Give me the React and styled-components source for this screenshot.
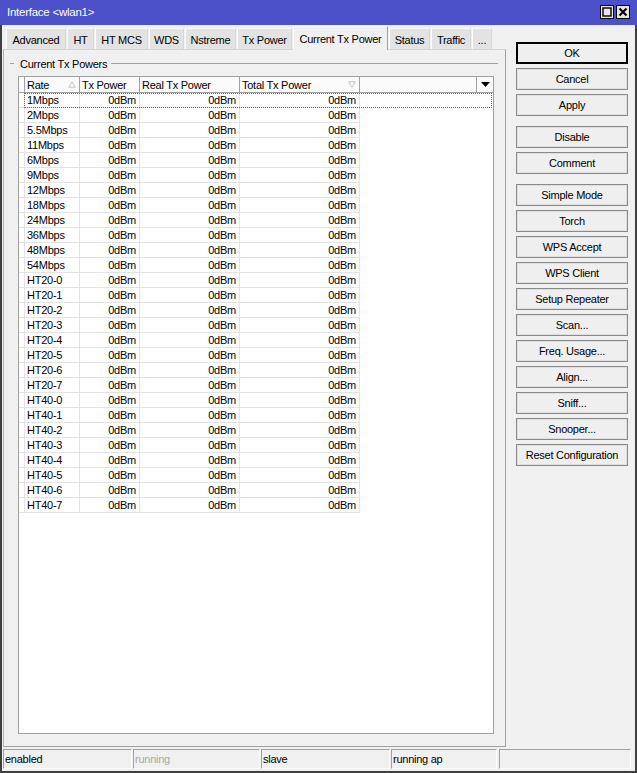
import React from "react";
import styled, { createGlobalStyle } from "styled-components";

const Global = createGlobalStyle`
  html, body { margin: 0; padding: 0; background: #f0f0f0; }
  body { font-family: "Liberation Sans", Arial, sans-serif; }
  * { box-sizing: border-box; }
`;

const FONT = `font-family: "Liberation Sans", Arial, sans-serif; font-size: 11px; letter-spacing: -0.25px;`;

const Window = styled.div`
  width: 637px;
  height: 773px;
  display: flex;
  flex-direction: column;
  background: #f0f0f0;
  border: 2px solid #3f3f3f;
  border-top: none;
  ${FONT}
  color: #000;
`;

const TitleBar = styled.div`
  height: 25px;
  flex: none;
  background: #4c50c9;
  color: #fff;
  display: flex;
  align-items: center;
  margin: 0 -2px;
  padding: 0 7px 1px 7px;
`;

const Title = styled.div`
  flex: 1;
  ${FONT}
  font-size: 11.5px;
`;

const TitleBtns = styled.div`
  display: flex;
  gap: 2px;
`;

const TitleBtn = styled.div`
  width: 14px;
  height: 14px;
  border: 1px solid #000;
  background: #e6e6e6;
  display: flex;
  align-items: center;
  justify-content: center;
`;

const Main = styled.div`
  flex: 1;
  display: flex;
  min-height: 0;
`;

const Left = styled.div`
  width: 503px;
  margin-left: 1px;
  display: flex;
  flex-direction: column;
`;

const TabRow = styled.div`
  height: 24px;
  display: flex;
  align-items: flex-end;
  padding-left: 3px;
  gap: 1px;
  position: relative;
  z-index: 1;
`;

const Tab = styled.div`
  width: ${(p) => `${p.$w}px`};
  flex: none;
  height: ${(p) => (p.$active ? "24px" : "21px")};
  display: flex;
  align-items: center;
  justify-content: center;
  padding-top: ${(p) => (p.$active ? "0" : "1px")};
  background: ${(p) => (p.$active ? "#f0f0f0" : "#e3e3e3")};
  border-left: 1px solid #fcfcfc;
  border-top: 1px solid #fcfcfc;
  border-right: 1px solid ${(p) => (p.$active ? "#a0a0a0" : "#d6d6d6")};
  margin-bottom: ${(p) => (p.$active ? "-1px" : "0")};
  white-space: nowrap;
  overflow: hidden;
`;

const Panel = styled.div`
  flex: 1;
  border: 1px solid #a0a0a0;
  border-top-color: #d4d4d4;
  border-left-color: #b4b4b4;
  display: flex;
  flex-direction: column;
  padding: 6px 11px 12px 5px;
`;

const GroupHead = styled.div`
  height: 15px;
  display: flex;
  align-items: center;
  margin-left: 1px;
  margin-right: -4px;
`;

const GroupLine = styled.div`
  height: 1px;
  background: #a0a0a0;
  flex: ${(p) => (p.$grow ? 1 : "none")};
  width: ${(p) => (p.$grow ? "auto" : "4px")};
`;

const GroupLabel = styled.div`
  padding: 0 4px 0 6px;
  white-space: nowrap;
`;

const Table = styled.div`
  flex: 1;
  margin-top: 5px;
  margin-left: 9px;
  border: 1px solid #a0a0a0;
  background: #fff;
  display: flex;
  flex-direction: column;
`;

const HeaderRow = styled.div`
  display: flex;
  height: 16px;
  border-bottom: 1px solid #a0a0a0;
  background: #fbfbfb;
`;

const HCell = styled.div`
  width: ${(p) => (p.$w ? `${p.$w}px` : "auto")};
  flex: ${(p) => (p.$w ? "none" : 1)};
  border-right: ${(p) => (p.$last ? "none" : "1px solid #a0a0a0")};
  display: flex;
  align-items: center;
  justify-content: ${(p) => (p.$center ? "center" : "space-between")};
  padding: 0 ${(p) => (p.$center ? 0 : 3)}px 0 ${(p) => (p.$center ? 0 : 2)}px;
  white-space: nowrap;
  overflow: hidden;
`;

const Row = styled.div`
  display: flex;
  height: 15px;
  position: relative;
  &::after {
    content: "";
    display: ${(p) => (p.$focused ? "block" : "none")};
    position: absolute;
    left: 5px;
    right: 1px;
    top: 0;
    bottom: 0;
    border: 1px dotted #6a6a6a;
    pointer-events: none;
  }
`;

const Cell = styled.div`
  width: ${(p) => `${p.$w}px`};
  flex: none;
  border-right: 1px solid #e3e3e3;
  border-bottom: 1px solid #e3e3e3;
  display: flex;
  align-items: center;
  justify-content: ${(p) => (p.$right ? "flex-end" : "flex-start")};
  padding: 0 3px 0 2px;
  white-space: nowrap;
  overflow: hidden;
  line-height: 14px;
`;

const Right = styled.div`
  width: 112px;
  margin-left: 10px;
  padding-top: 17px;
  display: flex;
  flex-direction: column;
`;

const BtnGroup = styled.div`
  display: flex;
  flex-direction: column;
  gap: 4px;
  margin-bottom: 10px;
`;

const Button = styled.div`
  height: 22px;
  display: flex;
  align-items: center;
  justify-content: center;
  background: #efefef;
  border: ${(p) => (p.$default ? "2px solid #000" : "1px solid #8a8a8a")};
  box-shadow: ${(p) => (p.$default ? "none" : "inset 0 0 0 1px #dedede")};
  padding-bottom: 1px;
  white-space: nowrap;
`;

const StatusBar = styled.div`
  height: 24px;
  flex: none;
  display: flex;
  gap: 1px;
  padding: 2px 0 2px 1px;
`;

const StatusCell = styled.div`
  width: ${(p) => `${p.$w}px`};
  margin-left: ${(p) => `${p.$ml || 0}px`};
  border-top: 1px solid #a0a0a0;
  border-left: 1px solid #a0a0a0;
  border-right: 1px solid #fdfdfd;
  border-bottom: 1px solid #fdfdfd;
  display: flex;
  align-items: center;
  padding-left: 1px;
  padding-bottom: 1px;
  color: ${(p) => (p.$dim ? "#a8a8a8" : "#000")};
`;

const SortUp = () => (
  <svg width="8" height="7" viewBox="0 0 8 7">
    <path d="M4 0.8 L7.3 6.2 L0.7 6.2 Z" fill="none" stroke="#c4c4c4" strokeWidth="1" />
  </svg>
);

const SortDown = () => (
  <svg width="8" height="7" viewBox="0 0 8 7">
    <path d="M0.7 0.8 L7.3 0.8 L4 6.2 Z" fill="none" stroke="#c4c4c4" strokeWidth="1" />
  </svg>
);

const DropArrow = () => (
  <svg width="9" height="5" viewBox="0 0 9 5">
    <path d="M0 0 L9 0 L4.5 5 Z" fill="#000" />
  </svg>
);

const tabs = [
  { t: "Advanced", w: 60 },
  { t: "HT", w: 27 },
  { t: "HT MCS", w: 53 },
  { t: "WDS", w: 35 },
  { t: "Nstreme", w: 51 },
  { t: "Tx Power", w: 55 },
  { t: "Current Tx Power", w: 95, active: true },
  { t: "Status", w: 41 },
  { t: "Traffic", w: 40 },
  { t: "...", w: 20 },
];

const rates = [
  "1Mbps", "2Mbps", "5.5Mbps", "11Mbps", "6Mbps", "9Mbps", "12Mbps", "18Mbps",
  "24Mbps", "36Mbps", "48Mbps", "54Mbps",
  "HT20-0", "HT20-1", "HT20-2", "HT20-3", "HT20-4", "HT20-5", "HT20-6", "HT20-7",
  "HT40-0", "HT40-1", "HT40-2", "HT40-3", "HT40-4", "HT40-5", "HT40-6", "HT40-7",
];

const buttonGroups = [
  ["OK", "Cancel", "Apply"],
  ["Disable", "Comment"],
  ["Simple Mode", "Torch", "WPS Accept", "WPS Client", "Setup Repeater", "Scan...", "Freq. Usage...", "Align...", "Sniff...", "Snooper...", "Reset Configuration"],
];

const statusCells = [
  { t: "enabled", w: 129 },
  { t: "running", w: 127, dim: true },
  { t: "slave", w: 129 },
  { t: "running ap", w: 106 },
  { t: "", w: 132, ml: 1 },
];

export default function App() {
  return (
    <>
      <Global />
      <Window>
        <TitleBar>
          <Title>Interface &lt;wlan1&gt;</Title>
          <TitleBtns>
            <TitleBtn>
              <svg width="10" height="10" viewBox="0 0 10 10">
                <rect x="1" y="1" width="8" height="8" fill="none" stroke="#000" strokeWidth="1.4" />
              </svg>
            </TitleBtn>
            <TitleBtn>
              <svg width="10" height="10" viewBox="0 0 10 10">
                <path d="M1.5 1.5 L8.5 8.5 M8.5 1.5 L1.5 8.5" stroke="#000" strokeWidth="2" />
              </svg>
            </TitleBtn>
          </TitleBtns>
        </TitleBar>
        <Main>
          <Left>
            <TabRow>
              {tabs.map((t) => (
                <Tab key={t.t} $w={t.w} $active={t.active}>{t.t}</Tab>
              ))}
            </TabRow>
            <Panel>
              <GroupHead>
                <GroupLine />
                <GroupLabel>Current Tx Powers</GroupLabel>
                <GroupLine $grow />
              </GroupHead>
              <Table>
                <HeaderRow>
                  <HCell $w={6} />
                  <HCell $w={55}>Rate<SortUp /></HCell>
                  <HCell $w={60}>Tx Power</HCell>
                  <HCell $w={100}>Real Tx Power</HCell>
                  <HCell $w={120}>Total Tx Power<SortDown /></HCell>
                  <HCell />
                  <HCell $w={16} $last $center><DropArrow /></HCell>
                </HeaderRow>
                {rates.map((r, i) => (
                  <Row key={r} $focused={i === 0}>
                    <Cell $w={6} />
                    <Cell $w={55}>{r}</Cell>
                    <Cell $w={60} $right>0dBm</Cell>
                    <Cell $w={100} $right>0dBm</Cell>
                    <Cell $w={120} $right>0dBm</Cell>
                  </Row>
                ))}
              </Table>
            </Panel>
          </Left>
          <Right>
            {buttonGroups.map((g, gi) => (
              <BtnGroup key={gi}>
                {g.map((b) => (
                  <Button key={b} $default={b === "OK"}>{b}</Button>
                ))}
              </BtnGroup>
            ))}
          </Right>
        </Main>
        <StatusBar>
          {statusCells.map((c, i) => (
            <StatusCell key={i} $w={c.w} $ml={c.ml} $dim={c.dim}>{c.t}</StatusCell>
          ))}
        </StatusBar>
      </Window>
    </>
  );
}
